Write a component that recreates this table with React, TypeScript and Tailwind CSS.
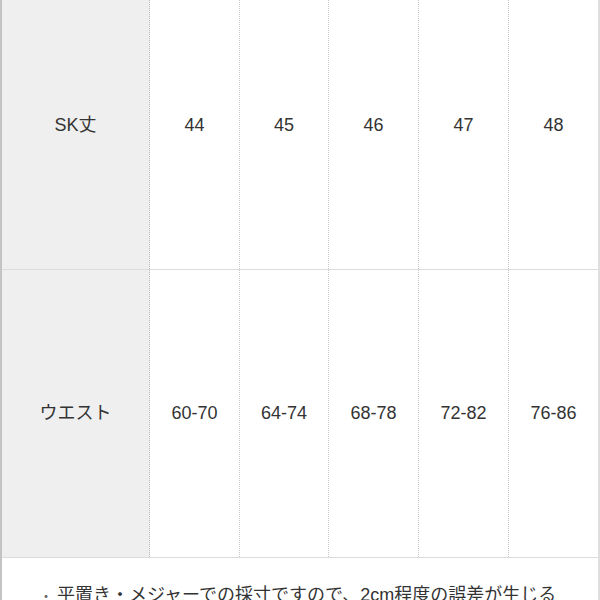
const sizes = [
  { label: 'SK丈', values: ['44', '45', '46', '47', '48'] },
  { label: 'ウエスト', values: ['60-70', '64-74', '68-78', '72-82', '76-86'] },
];

const widths = ['w-[90px]', 'w-[89px]', 'w-[90px]', 'w-[90px]', 'w-[89px]'];

export default function App() {
  return (
    <div
      className="w-[600px] h-[600px] overflow-hidden bg-white text-[#333] text-[18px]"
      style={{ fontFamily: '"Liberation Sans", "Noto Sans CJK JP", sans-serif' }}
    >
      <div className="-mt-[18px] border-l-2 border-r-2 border-l-[#c4c4c4] border-r-[#dedede]">
        {sizes.map((row) => (
          <div key={row.label} className="flex h-[288px] border-b border-[#dcdcdc]">
            <div className="w-[148px] bg-[#efefef] border-r border-dotted border-[#bdbdbd] flex items-center justify-center">
              {row.label}
            </div>
            {row.values.map((v, i) => (
              <div
                key={v}
                className={`${widths[i]} flex items-center justify-center ${
                  i < 4 ? 'border-r border-dotted border-[#c8c8c8]' : ''
                }`}
              >
                {v}
              </div>
            ))}
          </div>
        ))}
        <div className="pt-[23px] pl-[37px] h-[100px] leading-[28px]">
          <span className="text-[#666] text-[14px] mr-[4px]">・</span>
          平置き・メジャーでの採寸ですので、2cm程度の誤差が生じる
        </div>
      </div>
    </div>
  );
}
